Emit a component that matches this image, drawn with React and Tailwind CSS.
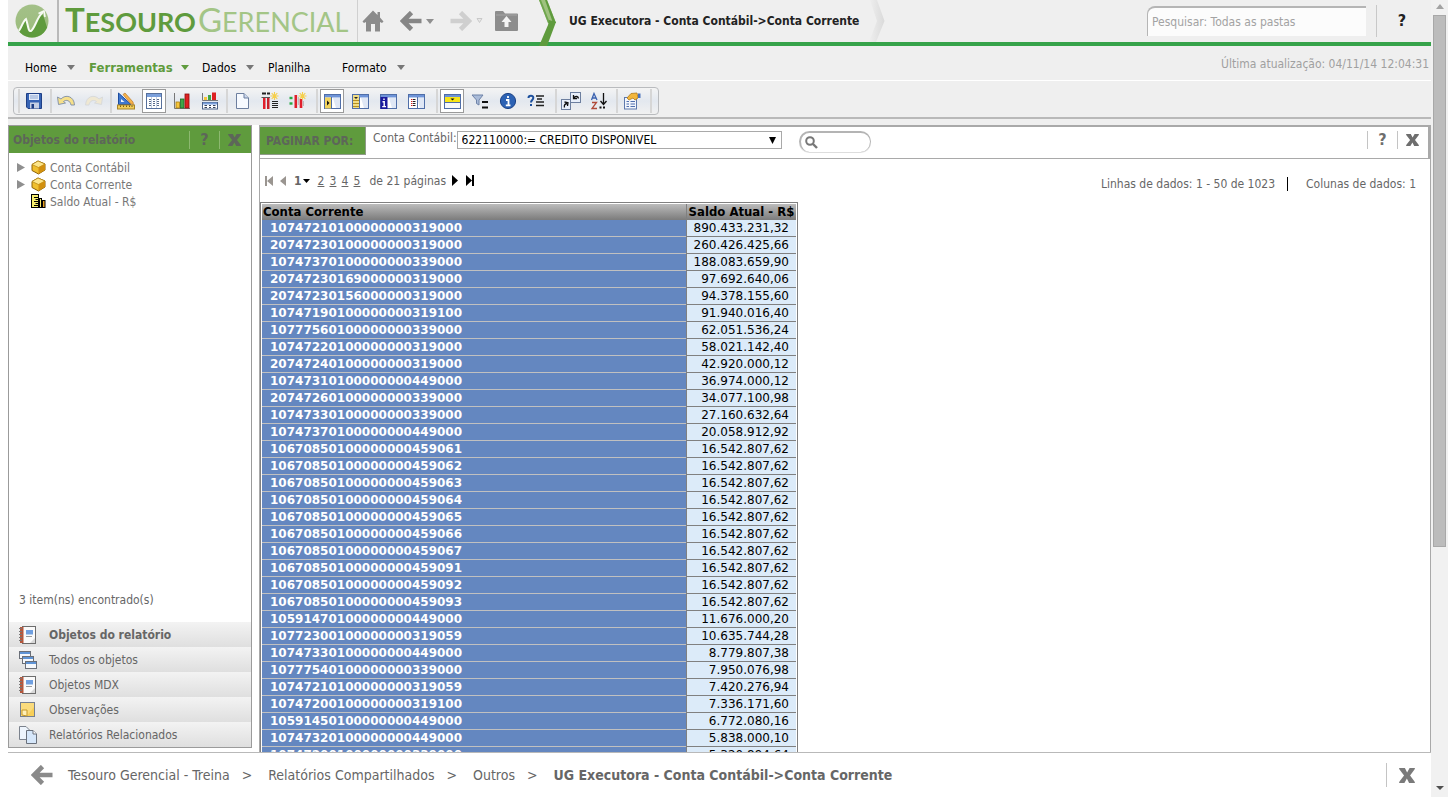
const ROWS = [
  ["10747210100000000319000", "890.433.231,32"],
  ["20747230100000000319000", "260.426.425,66"],
  ["10747370100000000339000", "188.083.659,90"],
  ["20747230169000000319000", "97.692.640,06"],
  ["20747230156000000319000", "94.378.155,60"],
  ["10747190100000000319100", "91.940.016,40"],
  ["10777560100000000339000", "62.051.536,24"],
  ["10747220100000000319000", "58.021.142,40"],
  ["20747240100000000319000", "42.920.000,12"],
  ["10747310100000000449000", "36.974.000,12"],
  ["20747260100000000339000", "34.077.100,98"],
  ["10747330100000000339000", "27.160.632,64"],
  ["10747370100000000449000", "20.058.912,92"],
  ["10670850100000000459061", "16.542.807,62"],
  ["10670850100000000459062", "16.542.807,62"],
  ["10670850100000000459063", "16.542.807,62"],
  ["10670850100000000459064", "16.542.807,62"],
  ["10670850100000000459065", "16.542.807,62"],
  ["10670850100000000459066", "16.542.807,62"],
  ["10670850100000000459067", "16.542.807,62"],
  ["10670850100000000459091", "16.542.807,62"],
  ["10670850100000000459092", "16.542.807,62"],
  ["10670850100000000459093", "16.542.807,62"],
  ["10591470100000000449000", "11.676.000,20"],
  ["10772300100000000319059", "10.635.744,28"],
  ["10747330100000000449000", "8.779.807,38"],
  ["10777540100000000339000", "7.950.076,98"],
  ["10747210100000000319059", "7.420.276,94"],
  ["10747200100000000319100", "7.336.171,60"],
  ["10591450100000000449000", "6.772.080,16"],
  ["10747320100000000449000", "5.838.000,10"],
  ["10747200100000000339000", "5.320.894,64"],
];

function Svg({ w = 18, h = 18, label, children, className = "shrink-0" }) {
  return (
    <svg width={w} height={h} viewBox={`0 0 ${w} ${h}`} className={className} aria-hidden={label ? undefined : true} role={label ? "img" : undefined} aria-label={label}>
      {children}
    </svg>
  );
}

/* ---------- header drawings ---------- */

const Globe = () => (
  <Svg w={34} h={34} label="Tesouro Gerencial">
    <defs>
      <linearGradient id="globe" x1="0" y1="0" x2="0" y2="1">
        <stop offset="0" stopColor="#a3c088" />
        <stop offset="1" stopColor="#9bbc7c" />
      </linearGradient>
      <clipPath id="disc"><circle cx="17" cy="17" r="16.5" /></clipPath>
    </defs>
    <circle cx="17" cy="17" r="16.5" fill="url(#globe)" />
    <g clipPath="url(#disc)">
      <path d="M0 29 L5 27 L8 18 L11 15 C12 20 14 27 16 27 C19 24 22 14 27 10 C30 14 31 22 33 25 V34 H0 Z" fill="#5f9b3d" />
      <path d="M2 28 C6 27 7 18 11 15 C13 20 13 28 16 27 C20 24 22 13 28 8" fill="none" stroke="#f6faf2" strokeWidth="2" />
      <path d="M23.5 9.5 L29 7 L30 13" fill="none" stroke="#f6faf2" strokeWidth="1.6" />
    </g>
  </Svg>
);

const HomeIcon = () => (
  <Svg w={22} h={22}>
    <path d="M11 0.5 L0.5 11.5 L2 13 L4 12 V21.5 H9 V14 H13 V21.5 H18 V12 L20 13 L21.5 11.5 L18 7.5 V2 H15.5 V5 Z" fill="#8b8b8b" />
  </Svg>
);

const Arrow = ({ color, flip, w = 22, h = 20 }) => (
  <svg width={w} height={h} viewBox="0 0 22 20" className={flip ? "shrink-0 -scale-x-100" : "shrink-0"} aria-hidden="true">
    <path d="M11.5 1.5 L3 10 L11.5 18.5 M3.5 10 H21.5" fill="none" stroke={color} strokeWidth="4.6" />
  </svg>
);

const Tri = ({ color = "#777", w = 8, h = 5, className = "shrink-0" }) => (
  <svg width={w} height={h} viewBox="0 0 8 5" preserveAspectRatio="none" className={className} aria-hidden="true">
    <path d="M0 0 H8 L4 5 Z" fill={color} />
  </svg>
);

const TriOutline = () => (
  <Svg w={7} h={6}><path d="M1 0.5 H6 L3.5 4.5 Z" fill="#e8e8e8" stroke="#c9c9c9" /></Svg>
);

const FolderUp = () => (
  <Svg w={23} h={20}>
    <path d="M1 0 H8 L10 2.5 H22 Q23 2.5 23 3.5 V19 Q23 20 22 20 H1 Q0 20 0 19 V1 Q0 0 1 0 Z" fill="#8d8d8d" />
    <path d="M1 4 H22" stroke="#a5a5a5" />
    <path d="M11.5 5 L16.5 11 H13.5 V16 H9.5 V11 H6.5 Z" fill="#f4f4f4" />
  </Svg>
);

const GreenChevron = () => (
  <Svg w={18} h={46} className="relative z-10 -mb-1 shrink-0">
    <path d="M0 0 H8 L17 23 H9 Z" fill="#9fc27f" />
    <path d="M6 0 H8 L17 23 H14 Z" fill="#5f9b3d" />
    <path d="M0 0 H2 L11 23 H9 Z" fill="#6fa64e" />
    <path d="M10 20 L17 22 L8 46 H0 L9 25 Z" fill="#5f9b3d" />
  </Svg>
);

const GreyChevron = () => (
  <Svg w={16} h={42}>
    <defs>
      <linearGradient id="gc" x1="0" x2="1"><stop offset="0" stopColor="#efefef" /><stop offset="1" stopColor="#dadada" /></linearGradient>
    </defs>
    <path d="M1 0 H8 L15.5 21 L7 42 H0 L8 21 Z" fill="url(#gc)" />
  </Svg>
);

const Cross = ({ w = 13, h = 12, color = "#6e6e6e" }) => (
  <svg width={w} height={h} viewBox="0 0 13 12" preserveAspectRatio="none" className="shrink-0" aria-hidden="true">
    <path d="M0 0 H4.8 L6.6 3.6 L8.6 0 H13 L12.6 1.2 L9 6 L12.6 10.8 L13 12 H8.2 L6.4 8.4 L4.4 12 H0 L0.4 10.8 L4.1 6 L0.4 1.2 Z" fill={color} />
  </svg>
);

/* ---------- toolbar drawings ---------- */

const Pane = ({ children }) => (
  <Svg w={17} h={17}>
    <rect x="0.5" y="1.5" width="16" height="14" fill="#fff" stroke="#4f6ea8" />
    <rect x="1" y="2" width="15" height="2.5" fill="#6d93d8" />
    <path d="M9 5 H16 V15 H12 Z" fill="#dfe7f5" />
    {children}
  </Svg>
);

const Save = () => (
  <Svg>
    <path d="M1.5 1.5 H16.5 V16.5 H3 L1.5 15 Z" fill="#3563b5" stroke="#1e3f86" />
    <rect x="4" y="2" width="10" height="6" fill="#e4ecf9" />
    <path d="M5 4 H13 M5 6 H13" stroke="#8ba5d2" />
    <rect x="5" y="10.5" width="9" height="6" fill="#c4cfe4" />
    <rect x="6.5" y="12" width="2.5" height="4.5" fill="#1e3f86" />
  </Svg>
);
const Undo = () => (
  <Svg>
    <path d="M0.5 5 L1.5 12.5 L8.5 11 L6.5 9.5 C9 7.5 13 8 14 13 L17.5 13 C17 4 8.5 2 4 7 Z" fill="#f6e08a" stroke="#7d8ca6" strokeWidth="0.9" />
  </Svg>
);
const Redo = () => (
  <Svg>
    <path d="M17.5 5 L16.5 12.5 L9.5 11 L11.5 9.5 C9 7.5 5 8 4 13 L0.5 13 C1 4 9.5 2 14 7 Z" fill="#efe8d2" stroke="#d6d8da" strokeWidth="0.9" />
  </Svg>
);
const Design = () => (
  <Svg>
    <path d="M1.5 1 V12.5 H14 Z" fill="#3f78d0" stroke="#1c4da0" />
    <path d="M4 7 V10 H7.5 Z" fill="#eef3fb" />
    <path d="M6 2.5 L8 1 L16 10 L16.5 12.5 L14 12 Z" fill="#f7b34a" stroke="#b9782a" strokeWidth="0.7" />
    <rect x="0.5" y="13" width="17" height="4" fill="#f2ce5b" stroke="#a6842a" />
    <path d="M3.5 13.5 V15 M6.5 13.5 V15 M9.5 13.5 V15 M12.5 13.5 V15 M15 13.5 V15" stroke="#7a5d14" />
  </Svg>
);
const Grid = () => (
  <Svg w={16} h={16}>
    <rect x="0.5" y="0.5" width="15" height="15" fill="#fff" stroke="#57709c" />
    <rect x="1" y="1" width="14" height="3" fill="#7ba0dc" />
    <path d="M3 6.5 H5 M7 6.5 H9 M11 6.5 H13 M3 8.5 H5 M7 8.5 H9 M11 8.5 H13 M3 10.5 H5 M7 10.5 H9 M11 10.5 H13 M3 12.5 H5 M7 12.5 H9 M11 12.5 H13" stroke="#5a6c8c" />
    <path d="M5.5 4 V15 M10.5 4 V15" stroke="#c3cfe3" />
  </Svg>
);
const Bars = () => (
  <Svg>
    <path d="M1.5 1 V16.5 H17" stroke="#777" fill="none" />
    <rect x="3" y="10" width="3.5" height="6" fill="#f5c53a" stroke="#a87d10" strokeWidth="0.8" />
    <rect x="7.5" y="7" width="3.5" height="9" fill="#3fa648" stroke="#1c6e24" strokeWidth="0.8" />
    <rect x="12" y="2" width="4" height="14" fill="#dd2222" stroke="#8e0d0d" strokeWidth="0.8" />
  </Svg>
);
const GridBars = () => (
  <Svg>
    <rect x="3" y="5" width="3" height="3" fill="#f5c53a" />
    <rect x="7" y="3" width="3" height="5" fill="#3fa648" />
    <rect x="11" y="0.5" width="4" height="7.5" fill="#dd2222" />
    <path d="M1.5 1 V8.5 H17" stroke="#777" fill="none" />
    <rect x="1.5" y="10.5" width="15" height="6.5" fill="#fff" stroke="#4b6186" />
    <path d="M2 11.5 H16" stroke="#7ba0dc" strokeWidth="2" />
    <path d="M3.5 13.5 H6 M8 13.5 H10 M12 13.5 H14.5 M3.5 15.5 H6 M8 15.5 H10 M12 15.5 H14.5" stroke="#33415a" />
  </Svg>
);
const Page = () => (
  <Svg>
    <path d="M3.5 1.5 H11 L15.5 6 V16.5 H3.5 Z" fill="#f7faff" stroke="#6d7f9f" />
    <path d="M11 1.5 V6 H15.5" fill="#cbd8ee" stroke="#6d7f9f" />
  </Svg>
);
const Spark = () => (
  <g stroke="#f6cf4a" strokeWidth="1.1">
    <path d="M13.5 0 V8 M9.5 4 H17.5 M10.7 1.2 L16.3 6.8 M16.3 1.2 L10.7 6.8" />
  </g>
);
const AddMetric = () => (
  <Svg>
    <path d="M1 1.5 H5 M6 1.5 H9" stroke="#222" strokeWidth="2" />
    <path d="M0.5 5.5 H9" stroke="#555" />
    <rect x="2" y="6" width="2.5" height="11" fill="#e01e2b" />
    <rect x="6" y="6" width="2.5" height="11" fill="#c9202b" />
    <path d="M11 9.5 H17 M11 11.5 H17 M11 13.5 H17 M11 15.5 H17" stroke="#222" />
    <Spark />
  </Svg>
);
const AddPercent = () => (
  <Svg>
    <path d="M0.5 6 H3.5" stroke="#27a844" strokeWidth="2.4" />
    <path d="M0.5 11.5 H3.5" stroke="#27a844" strokeWidth="2.4" />
    <path d="M6.8 3 V16 M12 7 V16" stroke="#e01e2b" strokeWidth="2.6" />
    <path d="M9.4 5 V13 M14.5 9 V14" stroke="#bbb" />
    <Spark />
  </Svg>
);
const ObjPane = () => (
  <Pane>
    <rect x="1" y="4.5" width="6" height="11" fill="#f2d35c" />
    <path d="M7.5 4 V15.5" stroke="#4f6ea8" />
    <path d="M3 7.5 L5.5 10 L3 12.5 Z" fill="#111" />
  </Pane>
);
const ListPane = () => (
  <Pane>
    <rect x="1" y="2" width="6" height="13" fill="#f0dd85" />
    <path d="M2 4 H6 L4 6 Z" fill="#222" />
    <path d="M1 7.5 H7 M1 10.5 H7 M1 13.5 H7" stroke="#b58f1f" />
    <path d="M7.5 4 V15.5" stroke="#4f6ea8" />
  </Pane>
);
const InfoPane = () => (
  <Pane>
    <rect x="0.5" y="4" width="7" height="12" fill="#1a1a9c" />
    <path d="M4 5.5 V7 M2.5 8.7 H4.2 V13 M2.2 13.6 H6" stroke="#fff" strokeWidth="1.4" fill="none" />
  </Pane>
);
const AttrPane = () => (
  <Pane>
    <path d="M3 6.5 H4.5 M3 8.5 H4.5 M3 10.5 H4.5 M3 12.5 H4.5" stroke="#d02222" />
    <path d="M5 6.5 H7.5 M5 8.5 H7.5 M5 10.5 H7.5 M5 12.5 H7.5" stroke="#222" />
    <path d="M9.5 4 V15.5" stroke="#4f6ea8" />
  </Pane>
);
const PagePane = () => (
  <Svg w={17} h={17}>
    <rect x="0.5" y="1.5" width="16" height="14" fill="#f5f8fd" stroke="#4f6ea8" />
    <rect x="1" y="2" width="15" height="2" fill="#6d93d8" />
    <rect x="1" y="4" width="15" height="5" fill="#f8e619" />
    <path d="M6.5 5.5 H10.5 L8.5 7.5 Z" fill="#111" />
    <path d="M1 9.5 H16" stroke="#4f6ea8" />
  </Svg>
);
const Filter = () => (
  <Svg>
    <path d="M1 3 H12 L8 8 V13 L5.5 11.5 V8 Z" fill="#a9bbd9" stroke="#6d82a8" />
    <path d="M11 10 H17 M11 15.5 H17" stroke="#111" strokeWidth="2" />
  </Svg>
);
const Info = () => (
  <Svg>
    <circle cx="9" cy="9" r="7.6" fill="#2c62b4" stroke="#1b4287" />
    <path d="M9 4 V6 M7 8 H9.5 V13 M6.8 13.3 H11.5" stroke="#fff" strokeWidth="1.8" fill="none" />
  </Svg>
);
const Prompt = () => (
  <Svg>
    <path d="M1.5 6 C1.5 3 6.5 3 6.3 6 C6.2 8 4 8 4 10.5 M4 12 V14" stroke="#1c4f9c" strokeWidth="2" fill="none" />
    <path d="M9 4 H17 M10 7 H15 M9 10 H17 M9 13.5 H17" stroke="#222" strokeWidth="1.3" />
  </Svg>
);
const Swap = () => (
  <Svg w={20} h={18}>
    <rect x="9.5" y="0.5" width="10" height="10" fill="#e8effa" stroke="#6d7f9f" />
    <rect x="0.5" y="7.5" width="9" height="10" fill="#e8effa" stroke="#6d7f9f" />
    <path d="M17.5 6.5 C17 4 15 4 13 5.5 M12.5 3 V6.5 H16" stroke="#111" strokeWidth="1.3" fill="none" />
    <path d="M3.5 15.5 C2.8 13 4 12 6 11.5 M3.5 10 L7 10.7 L6.5 14" stroke="#111" strokeWidth="1.3" fill="none" />
  </Svg>
);
const Sort = () => (
  <Svg>
    <path d="M1.5 8 L4 1.5 L7 8 M2.5 6 H6" stroke="#3a62b0" strokeWidth="1.3" fill="none" />
    <path d="M2 10.5 H6.5 L2 16.5 H7" stroke="#b04a3a" strokeWidth="1.3" fill="none" />
    <path d="M13.5 1 V12 M10.5 9 L13.5 12.5 L16.5 9" stroke="#111" strokeWidth="1.3" fill="none" />
    <path d="M9.5 15.5 H11.5 M13 15.5 H15" stroke="#111" strokeWidth="2" />
  </Svg>
);
const Props = () => (
  <Svg>
    <rect x="1.5" y="5.5" width="12" height="11.5" fill="#f1f5fc" stroke="#5c78ad" />
    <path d="M3.5 9.5 H6 M7.5 9.5 H12 M3.5 12 H6 M7.5 12 H12 M3.5 14.5 H6 M7.5 14.5 H12" stroke="#4f6fae" />
    <path d="M4 6 L8 1.5 L14 1 L15 6 L12 8 L10 6 L6 8 Z" fill="#f2b63c" stroke="#b07a18" strokeWidth="0.8" />
    <path d="M15 1.5 H17.5 V6 H15 Z" fill="#4a72bd" />
  </Svg>
);

const GROUPS = [
  { w: "w-8", items: [["Salvar", Save]] },
  { w: "w-15", items: [["Desfazer", Undo], ["Refazer", Redo]] },
  { w: "w-[116px]", items: [["Desenho", Design], ["Grade", Grid, true], ["Gráfico", Bars], ["Grade e gráfico", GridBars]] },
  { w: "w-[90px]", items: [["Nova página", Page], ["Inserir métrica", AddMetric], ["Inserir porcentagem", AddPercent]] },
  { w: "w-30", items: [["Objetos do relatório", ObjPane, true], ["Todos os objetos", ListPane], ["Observações", InfoPane], ["Relacionados", AttrPane]] },
  { w: "w-[119px]", items: [["Paginar por", PagePane, true], ["Filtro", Filter], ["Detalhes", Info], ["Prompts", Prompt]] },
  { w: "w-[61px]", items: [["Trocar eixos", Swap], ["Classificar", Sort]] },
  { w: "w-[34px]", items: [["Propriedades", Props]] },
];

const MENUS = [
  { label: "Home", w: "w-16", arrow: true },
  { label: "Ferramentas", w: "w-[113px]", arrow: true, active: true },
  { label: "Dados", w: "w-[66px]", arrow: true },
  { label: "Planilha", w: "w-[74px]" },
  { label: "Formato", w: "w-16", arrow: true },
];

/* ---------- side panel drawings ---------- */

const Cube = () => (
  <Svg w={15} h={15}>
    <path d="M7 1 L14 4 L14 10 L7.5 14 L1 10.5 L1 4.5 Z" fill="#f0bf2e" stroke="#8d6208" />
    <path d="M7 1 L14 4 L7.5 7.5 L1 4.5 Z" fill="#fde58a" stroke="#b0820f" strokeWidth="0.7" />
    <path d="M7.5 7.5 L14 4 V10 L7.5 14 Z" fill="#d2900f" />
  </Svg>
);
const Metric = () => (
  <Svg w={15} h={15}>
    <rect x="0.5" y="0.5" width="7" height="13" fill="#f7ee6d" stroke="#000" />
    <path d="M3 3.5 H7 M4.5 5.5 H7 M3 7.5 H7 M4.5 9.5 H7 M3 11.5 H7" stroke="#000" />
    <rect x="8.5" y="4.5" width="2" height="9" fill="#f7ee6d" stroke="#000" />
    <rect x="11.5" y="6.5" width="2.5" height="7" fill="#e8a020" stroke="#000" />
  </Svg>
);
const Notebook = () => (
  <Svg>
    <rect x="3.5" y="0.5" width="13" height="17" fill="#fafafa" stroke="#6d6d6d" />
    <rect x="1" y="1" width="3.5" height="16" fill="#b5573d" />
    <path d="M0 2.5 H3 M0 5.5 H3 M0 8.5 H3 M0 11.5 H3 M0 14.5 H3" stroke="#777" />
    <rect x="7" y="4" width="7" height="4.5" fill="#6f9fe0" />
    <path d="M7 10.5 H13" stroke="#9a9a9a" />
    <path d="M16 12 L11 17 H16 Z" fill="#d8d8d8" />
  </Svg>
);
const Stack = () => (
  <Svg>
    {[[0.5, 0.5], [3.5, 5.5], [6.5, 10.5]].map(([x, y]) => (
      <g key={x}>
        <rect x={x} y={y} width="11" height="7" fill="#f5f8fc" stroke="#6a6f78" />
        <rect x={x + 0.5} y={y + 0.5} width="10" height="2" fill="#5f94d6" />
      </g>
    ))}
  </Svg>
);
const Note = () => (
  <Svg>
    <rect x="1.5" y="1.5" width="14" height="14" fill="#f8cf58" stroke="#77808f" />
    <path d="M2 2 H15 V6 L8 15 H2 Z" fill="#fbe08c" opacity="0.7" />
    <path d="M3 9 H8 V15 L3 14 Z" fill="#fff0b8" stroke="#c79a2a" />
  </Svg>
);
const Pages = () => (
  <Svg>
    <path d="M0.5 0.5 H7 L10.5 4 V13.5 H0.5 Z" fill="#eef5fd" stroke="#7b828d" />
    <path d="M7.5 4.5 H14 L17.5 8 V17.5 H7.5 Z" fill="#d6e7fa" stroke="#6a717c" />
    <path d="M14 4.5 V8 H17.5" fill="#fff" stroke="#6a717c" />
  </Svg>
);

const TABS = [
  { label: "Objetos do relatório", Icon: Notebook, active: true },
  { label: "Todos os objetos", Icon: Stack },
  { label: "Objetos MDX", Icon: Notebook },
  { label: "Observações", Icon: Note },
  { label: "Relatórios Relacionados", Icon: Pages },
];

const TREE = [
  { label: "Conta Contábil", Icon: Cube, open: true },
  { label: "Conta Corrente", Icon: Cube, open: true },
  { label: "Saldo Atual - R$", Icon: Metric },
];

function Header() {
  return (
    <header className="flex h-[46px] items-stretch border-b-4 border-[#36a34a]">
      <div className="flex w-[51px] items-center border-r-2 border-[#b9b9b9] pl-[7px]">
        <Globe />
      </div>
      <a href="#inicio" className="flex w-[299px] items-center border-r border-[#d0d0d0] pb-1 pl-1.5 font-['Lato',sans-serif] leading-none">
        <span className="text-[33px] font-bold text-[#5f9b3d]">T</span>
        <span className="pt-1 text-[27px] font-bold text-[#5f9b3d]">ESOURO</span>
        <span className="pl-0.5 text-[33px] text-[#a3c586]">G</span>
        <span className="pt-1 text-[27px] text-[#a3c586]">ERENCIAL</span>
      </a>
      <nav aria-label="Navegação" className="flex w-[181px] items-center pl-1">
        <button aria-label="Início"><HomeIcon /></button>
        <button aria-label="Voltar" className="ml-4 flex items-center gap-1"><Arrow color="#868686" /><Tri color="#8f8f8f" /></button>
        <button aria-label="Avançar" className="ml-4 flex items-center gap-1"><Arrow color="#cfcfcf" flip /><TriOutline /></button>
        <button aria-label="Pasta superior" className="ml-3"><FolderUp /></button>
      </nav>
      <GreenChevron />
      <h1 className="flex flex-1 items-center gap-2.5 pl-3 text-xs font-bold text-[#222]">
        UG Executora - Conta Contábil-&gt;Conta Corrente
        <GreyChevron />
      </h1>
      <div className="flex items-center">
        <input
          aria-label="Pesquisar"
          placeholder="Pesquisar: Todas as pastas"
          className="h-[30px] w-[219px] rounded-tl-lg border-t-2 border-l border-[#b5b5b5] bg-[#fcfcfc] px-1 text-xs placeholder:text-[#a3a3a3]"
        />
        <span className="ml-2.5 h-8 w-px bg-[#c8c8c8]" />
        <button aria-label="Ajuda" className="w-[54px] pr-1 text-base font-bold text-[#222]">?</button>
      </div>
    </header>
  );
}

function MenuBar() {
  return (
    <nav aria-label="Menu" className="flex h-[35px] items-start justify-between border-b border-white pl-[17px]">
      <div className="flex h-[35px] items-center pt-2 text-xs text-black">
        {MENUS.map((m) => (
          <button
            key={m.label}
            className={m.active
              ? "flex w-[113px] items-center gap-2 text-[13px] font-bold text-[#5f9b3d]"
              : `flex ${m.w} items-center gap-2.5`}
          >
            {m.label}
            {m.arrow && <Tri color={m.active ? "#5f9b3d" : "#777"} />}
          </button>
        ))}
      </div>
      <p className="pt-2.5 pr-0.5 text-xs text-[#a0a0a0]">Última atualização: 04/11/14 12:04:31</p>
    </nav>
  );
}

function Toolbar() {
  return (
    <div className="flex h-[38px] items-start border-b-2 border-[#b9b9b9] pt-1.5 pl-[5px]">
      <div role="toolbar" aria-label="Ferramentas" className="flex h-7 items-center rounded border border-[#b9bbbe] bg-linear-to-b from-[#f4f4f4] via-[#e3e8ef] to-[#f1f1f1] pl-1">
        {GROUPS.map((g, i) => (
          <div key={i} className={`flex h-6 ${g.w} items-center border-l-2 border-[#d6d6d6]`}>
            {g.items.map(([label, Icon, on]) => (
              <button
                key={label}
                aria-label={label}
                className={on
                  ? "mx-0.5 flex h-6 w-6 items-center justify-center border border-[#9a9a9a] bg-white"
                  : "flex h-6 w-7 items-center justify-center"}
              >
                <Icon />
              </button>
            ))}
          </div>
        ))}
        <div className="h-6 w-2 border-l-2 border-[#d6d6d6]" />
      </div>
    </div>
  );
}

function SidePanel() {
  return (
    <aside className="mb-1 flex w-[244px] shrink-0 flex-col border border-[#9b9b9b]">
      <div className="flex h-[27px] shrink-0 items-center bg-[#5f9b3d] pl-1 text-xs font-bold text-[#5d6659]">
        <h2 className="flex-1">Objetos do relatório</h2>
        <button aria-label="Ajuda do painel" className="h-[18px] w-[30px] border-l border-[#8cb86f] text-base leading-none">?</button>
        <button aria-label="Fechar painel" className="flex h-[18px] w-8 items-center justify-start border-l border-[#8cb86f] pl-2">
          <Cross color="#5d6659" />
        </button>
      </div>
      <ul className="flex-1 pt-1.5 pl-2 text-xs text-[#777]">
        {TREE.map(({ label, Icon, open }) => (
          <li key={label} className="flex h-[17px] items-center">
            <span className="w-[14px]">
              {open && <Svg w={8} h={9}><path d="M0 0 L8 4.5 L0 9 Z" fill="#8f8f8f" /></Svg>}
            </span>
            <Icon />
            <span className="pl-1">{label}</span>
          </li>
        ))}
      </ul>
      <p className="px-2.5 pb-3.5 text-xs text-[#666]">3 item(ns) encontrado(s)</p>
      <div className="flex flex-col">
        {TABS.map(({ label, Icon, active }) => (
          <button
            key={label}
            className={`flex h-[25px] items-center gap-3 bg-linear-to-b from-[#f3f3f3] to-[#dfdfdf] pl-2.5 text-left text-xs text-[#666] ${active ? "font-bold" : ""}`}
          >
            <Icon />
            {label}
          </button>
        ))}
      </div>
    </aside>
  );
}

function PageBy() {
  return (
    <div className="flex h-[34px] items-start justify-between border-t-2 border-r-2 border-b border-[#a9a9a9]">
      <div className="flex items-start">
        <h2 className="flex h-7 w-[106px] items-center border-r border-b border-[#8f9a88] bg-[#5f9b3d] pl-1.5 text-xs font-bold text-[#5d6659]">PAGINAR POR:</h2>
        <label htmlFor="conta" className="pt-[3px] pl-[7px] text-xs leading-4 text-[#666]">Conta Contábil:</label>
        <div className="relative mt-1 flex h-[18px]">
          <select id="conta" className="h-[18px] w-[325px] appearance-none border border-[#a9a9a9] bg-white px-1 text-xs leading-4 text-black">
            <option>622110000:= CREDITO DISPONIVEL</option>
          </select>
          <Tri color="#000" w={7} h={7} className="pointer-events-none absolute top-1.5 right-1.5" />
        </div>
        <div className="mt-1 ml-[17px] flex h-[21px] w-18 items-center rounded-full border-t-2 border-r border-l-2 border-[#b4b4b4] pl-1 shadow-[0_1px_0_#ddd]">
          <Svg w={13} h={13}>
            <circle cx="5" cy="5" r="3.8" fill="none" stroke="#777" strokeWidth="2" />
            <path d="M8 8 L12 12" stroke="#777" strokeWidth="2.4" />
          </Svg>
          <input aria-label="Buscar elemento" className="w-12 bg-transparent text-xs outline-none" />
        </div>
      </div>
      <div className="flex h-[26px] items-center">
        <button aria-label="Ajuda da paginação" className="h-[18px] w-[30px] border-l border-[#c4c4c4] text-base leading-none font-bold text-[#6e6e6e]">?</button>
        <button aria-label="Fechar paginação" className="flex h-[18px] w-[31px] items-center border-l border-[#c4c4c4] pl-2"><Cross /></button>
      </div>
    </div>
  );
}

function Pager() {
  return (
    <div className="flex h-[43px] items-center justify-between pr-3.5 pl-[5px] text-xs text-[#666]">
      <div className="flex items-center">
        <button aria-label="Primeira página"><Svg w={9} h={10}><path d="M0 0 H2 V10 H0 Z M8 0 V10 L2 5 Z" fill="#9a9590" /></Svg></button>
        <button aria-label="Página anterior" className="ml-1.5"><Svg w={6} h={10}><path d="M6 0 V10 L0 5 Z" fill="#9a9590" /></Svg></button>
        <button className="ml-2 flex items-center gap-px font-bold">1<Tri color="#000" w={7} h={4} /></button>
        <span className="ml-2 flex gap-1">
          {[2, 3, 4, 5].map((n) => <a key={n} href={`#p${n}`} className="w-2 underline">{n}</a>)}
        </span>
        <span className="ml-2">de 21 páginas</span>
        <button aria-label="Próxima página" className="ml-1.5"><Svg w={6} h={11}><path d="M0 0 V11 L6 5.5 Z" fill="#000" /></Svg></button>
        <button aria-label="Última página" className="ml-2"><Svg w={8} h={11}><path d="M0 0 V11 L6 5.5 Z M6 0 H8 V11 H6 Z" fill="#000" /></Svg></button>
      </div>
      <div className="flex items-center pt-1.5">
        <span>Linhas de dados: 1 - 50 de 1023</span>
        <span className="mr-[18px] ml-3 h-3.5 w-px bg-black" />
        <span>Colunas de dados: 1</span>
      </div>
    </div>
  );
}

function DataTable() {
  return (
    <div className="min-h-0 flex-1 overflow-hidden">
      <table className="w-[538px] table-fixed border-separate border-spacing-0 border border-[#808080] p-px font-['DejaVu_Sans',sans-serif] text-xs">
        <colgroup>
          <col />
          <col className="w-[110px]" />
        </colgroup>
        <thead>
          <tr className="h-4">
            <th className="bg-linear-to-b from-[#bcbcbc] to-[#7c7c7c] p-0 pl-px text-left font-['DejaVu_Sans_Condensed',sans-serif] text-[13px] leading-4 text-black">Conta Corrente</th>
            <th className="border-l border-[#808080] bg-linear-to-b from-[#bcbcbc] to-[#7c7c7c] p-0 text-center font-['DejaVu_Sans_Condensed',sans-serif] text-[13px] leading-4 whitespace-nowrap text-black">Saldo Atual - R$</th>
          </tr>
        </thead>
        <tbody>
          {ROWS.map(([conta, saldo]) => (
            <tr key={conta}>
              <th scope="row" className="border-b border-[#c0c0c0] bg-[#6487c0] p-0 pl-2 text-left leading-4 font-bold text-white">{conta}</th>
              <td className="border-b border-l border-[#808080] bg-[#dcebf9] p-0 pr-[7px] text-right leading-4 text-black">{saldo}</td>
            </tr>
          ))}
        </tbody>
      </table>
    </div>
  );
}

const CRUMBS = ["Tesouro Gerencial - Treina", "Relatórios Compartilhados", "Outros"];

function Footer() {
  return (
    <footer className="flex h-[45px] shrink-0 items-center border-t border-[#b9b9b9] pr-4 pl-[23px] text-sm text-[#666]">
      <button aria-label="Voltar" className="mr-[15px]"><Arrow color="#8a8a8a" /></button>
      <nav aria-label="Caminho" className="flex flex-1 items-center">
        {CRUMBS.map((c) => (
          <span key={c} className="flex">
            <a href={`#${c}`}>{c}</a>
            <span className="mr-4 ml-3">&gt;</span>
          </span>
        ))}
        <b>UG Executora - Conta Contábil-&gt;Conta Corrente</b>
      </nav>
      <span className="mr-3 h-6 w-px bg-[#c4c4c4]" />
      <button aria-label="Fechar"><Cross w={16} h={15} color="#7a7a7a" /></button>
    </footer>
  );
}

function ScrollRail() {
  return (
    <div className="flex w-[17px] shrink-0 flex-col items-center justify-between bg-[#f1f1f1] pt-1">
      <div className="flex min-h-0 flex-1 flex-col items-center">
        <Svg w={8} h={5}><path d="M4 0 L8 5 H0 Z" fill="#a3a3a3" /></Svg>
        <div className="mt-1.5 h-[68%] w-[13px] border border-[#a8a8a8] bg-[#bcbcbc]" />
      </div>
      <Tri color="#505050" w={8} h={4} className="mb-[7px]" />
    </div>
  );
}

export default function App() {
  return (
    <div className="flex h-screen bg-white pr-[7px] pb-[7px] pl-2 font-['DejaVu_Sans_Condensed','DejaVu_Sans',sans-serif]">
      <div className="flex min-w-0 flex-1 flex-col">
        <div className="shrink-0 bg-[#efefef] pb-[6px]">
          <Header />
          <MenuBar />
          <Toolbar />
        </div>
        <main className="flex min-h-0 flex-1">
          <SidePanel />
          <section className="ml-[7px] flex min-w-0 flex-1 flex-col border-r border-l border-[#a9a9a9]">
            <PageBy />
            <Pager />
            <DataTable />
          </section>
        </main>
        <Footer />
      </div>
      <ScrollRail />
    </div>
  );
}
